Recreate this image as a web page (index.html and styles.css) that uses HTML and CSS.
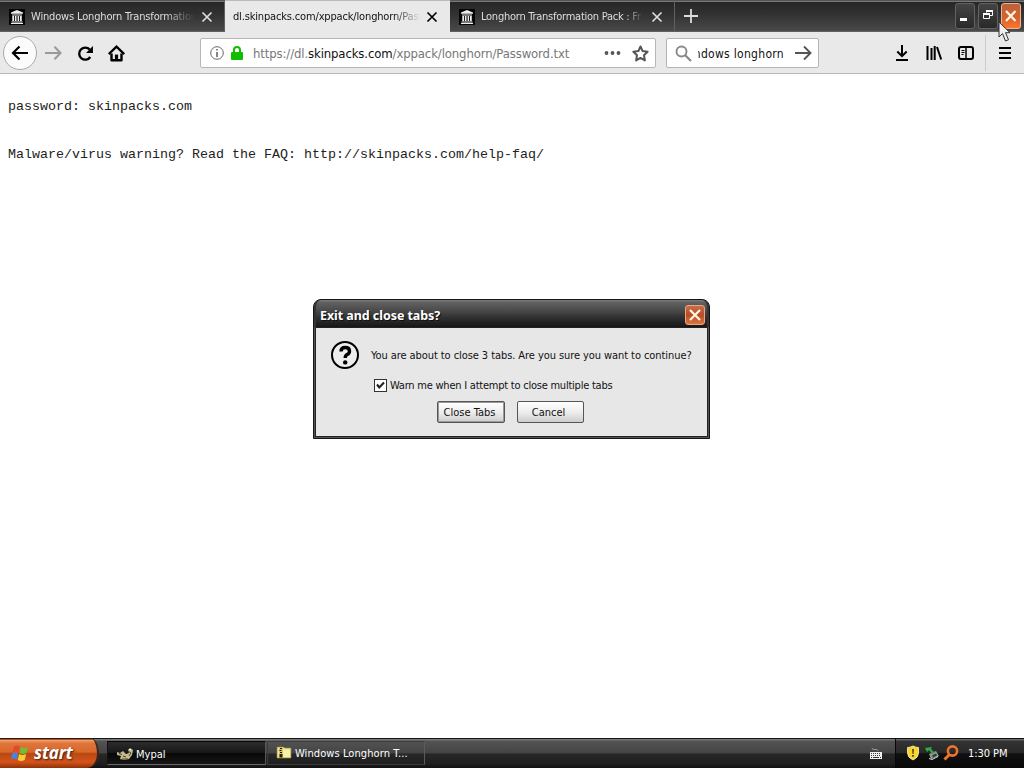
FILE: index.html
```html
<!DOCTYPE html>
<html lang="en">
<head>
<meta charset="utf-8">
<title>dl.skinpacks.com/xppack/longhorn/Password.txt</title>
<link rel="stylesheet" href="styles.css">
</head>
<body>
<svg class="defs" width="0" height="0">
  <symbol id="temple" viewBox="0 0 16 16"><rect width="16" height="16" fill="#050505"/><path d="M2 4.700V3.600L8 1l6 2.600v1.100zM3 5.500h10v1H3zM3.300 7h1.800v5H3.300zM6 7h1.500v5H6zM8.600 7h1.500v5H8.600zM11 7h1.800v5H11zM2.500 12.500h11v.9h-11zM2 14h12v1H2z" fill="#eee"/></symbol>
  <symbol id="cross" viewBox="0 0 12 12"><path d="M1.500 1.500l9 9m0-9l-9 9" fill="none" stroke="currentColor" stroke-width="1.700"/></symbol>
</svg>
<div class="screen">
  <header class="tabstrip">
    <div class="tab"><svg class="favicon"><use href="#temple"/></svg><span class="tab-title t1">Windows Longhorn Transformation</span><svg class="tab-close"><use href="#cross"/></svg></div>
    <div class="tab active"><span class="tab-title t2">dl.skinpacks.com/xppack/longhorn/Pass</span><svg class="tab-close"><use href="#cross"/></svg></div>
    <div class="tab"><svg class="favicon"><use href="#temple"/></svg><span class="tab-title t3">Longhorn Transformation Pack : Fr</span><svg class="tab-close"><use href="#cross"/></svg></div>
    <svg class="newtab" viewBox="0 0 14 14"><path d="M7 0v14M0 7h14" stroke="#ddd" stroke-width="1.800"/></svg>
    <div class="winbuttons">
      <div class="wb"><svg viewBox="0 0 17 24"><path d="M4 14h7v3H4z" fill="#fff"/></svg></div>
      <div class="wb"><svg viewBox="0 0 17 24"><path d="M7.500 8.500v-2h6v5h-2.500M4.500 9.500h6v5h-6z" fill="none" stroke="#fff"/><path d="M7 7h7M4 10h7" stroke="#fff" stroke-width="2"/></svg></div>
      <div class="wb close"><svg viewBox="0 0 17 24"><path d="M4 7l9.500 10M13.500 7L4 17" stroke="#fff3dc" stroke-width="2.300"/></svg></div>
    </div>
  </header>

  <nav class="toolbar">
    <div class="back"><svg width="18" height="16" viewBox="0 0 18 16"><path d="M17 8H2M8.500 1.500L2 8l6.500 6.500" fill="none" stroke="#000" stroke-width="2.200"/></svg></div>
    <svg class="fwd" viewBox="0 0 18 16"><path d="M0 8h15M9.500 1.800L15.500 8l-6 6.200" fill="none" stroke="#999" stroke-width="2"/></svg>
    <svg class="reload" viewBox="0 0 16 16"><path d="M12.500 11.300A5.700 5.700 0 1 1 12 4.300" fill="none" stroke="#000" stroke-width="2.200"/><path d="M15 1v6.500H8.500z"/></svg>
    <svg class="home" viewBox="0 0 16 16"><path d="M.7 8.600L8 1.500l7.300 7.100" fill="none" stroke="#000" stroke-width="2.100"/><path d="M3.300 8v6.300h9.400V8" fill="none" stroke="#000" stroke-width="2.300" stroke-linejoin="round"/><path d="M6.500 9h3v5h-3z"/></svg>
    <div class="urlbar">
      <svg class="info" viewBox="0 0 14 14"><circle cx="7" cy="7" r="6.300" fill="none" stroke="#666"/><path d="M6.200 3h1.600v1.600H6.200zM6.200 6h1.600v5H6.200z" fill="#666"/></svg>
      <svg class="lock" viewBox="0 0 12 14"><path d="M3 7V4a3 3 0 0 1 6 0v3" fill="none" stroke="#12bc00" stroke-width="2"/><rect y="6" width="12" height="8" rx="1" fill="#12bc00"/></svg>
      <span class="url">https://dl.<b>skinpacks.com</b>/xppack/longhorn/Password.txt</span>
      <svg class="dots" viewBox="0 0 16 4"><circle cx="2" cy="2" r="1.900"/><circle cx="8" cy="2" r="1.900"/><circle cx="14" cy="2" r="1.900"/></svg>
      <svg class="star" viewBox="0 0 16 16"><path d="M8 1.400l2 4.300 4.700.6-3.400 3.300.8 4.900L8 12.200l-4.100 2.300.8-4.900L1.300 6.300 6 5.700z" fill="none" stroke="#555" stroke-width="1.900" stroke-linejoin="round"/></svg>
    </div>
    <div class="search">
      <svg class="glass" viewBox="0 0 17 17"><circle cx="6.500" cy="6.500" r="5" fill="none" stroke="#888" stroke-width="1.900"/><path d="M10 10l6 6" stroke="#888" stroke-width="2.200"/></svg>
      <span class="query"><span>ndows longhorn</span></span>
      <svg class="go" viewBox="0 0 17 16"><path d="M0 8h15M9 1.500L15.500 8 9 14.500" fill="none" stroke="#555" stroke-width="1.900"/></svg>
    </div>
    <div class="tools">
      <svg viewBox="0 0 16 16"><path d="M8 0v11M3.300 6.500L8 11.200l4.700-4.700M2 15h12" fill="none" stroke="#000" stroke-width="2"/></svg>
      <svg viewBox="0 0 16 16"><path d="M1.500 1v14M5.500 3v12M8.700 1v14M11 2l4.200 12.500" fill="none" stroke="#000" stroke-width="2"/></svg>
      <svg viewBox="0 0 16 16"><rect x="1" y="2" width="14" height="12" rx="2" fill="none" stroke="#000" stroke-width="2"/><path d="M8 2v12" stroke="#000" stroke-width="1.500"/><path d="M3.500 5.500h3M3.500 7.500h3M3.500 9.500h2" stroke="#000"/></svg>
    </div>
    <div class="menu"><svg width="12" height="12" viewBox="0 0 12 12"><path d="M0 1h12M0 6h12M0 11h12" stroke="#000" stroke-width="2"/></svg></div>
  </nav>

  <main class="page">
<pre>
password: skinpacks.com


Malware/virus warning? Read the FAQ: http://skinpacks.com/help-faq/</pre>
  </main>

  <footer class="taskbar">
    <div class="start"><svg class="flag" viewBox="0 0 20 18"><path d="M4 2.500q3-2 6 0L8.500 8.500q-3-2-6 0z" fill="#e34a28"/><path d="M11 3q3 2 7 0l-1.500 6q-4 2-7 0z" fill="#72bd32"/><path d="M2.200 9.500q3-2 6 0l-1.500 6q-3-2-6 0z" fill="#4a83dc"/><path d="M9.200 10q3 2 7 0l-1.500 6q-4 2-7 0z" fill="#f6ce38"/></svg><span>start</span></div>
    <div class="task pressed"><svg class="task-icon" viewBox="0 0 16 16"><path d="M0 6l3 1 3-2 3 3 3-1-1-3 2-2 3 2-1 5-3 4-5 1-4-1 1-3-4-1z" fill="#c5ba91"/><path d="M2 7.500l3 1M6 10l3 1M11 5l3 2-2 3M5 13h6" stroke="#4c4228" fill="none"/><path d="M12 3h2v1h-2z" fill="#fff"/></svg><span>Mypal</span></div>
    <div class="task"><svg class="task-icon" viewBox="0 0 16 16"><path d="M1 2h6l2 1h6v10H1z" fill="#efe49a" stroke="#91843b" stroke-width=".7"/><path d="M7 5h7v7H7z" fill="#f8efaa"/><path d="M3 2.500h4v10.500H3z" fill="#d8ca68"/><path d="M4 3.500h2M3.500 5.500h2M4 7.500h2" stroke="#111"/><path d="M3.500 9h3v3.500h-3z" fill="#28230b"/></svg><span class="longhorn">Windows Longhorn T...</span></div>
    <svg class="keyboard" viewBox="0 0 14 11"><path d="M3 0q0 2 3 1.500T9 3" fill="none" stroke="#aaa" stroke-width=".8"/><path d="M1 4h12v7H1z" fill="#f1f1f1"/><path d="M2 5.500h10M2 7.500h10" stroke="#333" stroke-dasharray="1 1"/><path d="M2 9.500h1M4 9.500h6M11 9.500h1" stroke="#333"/></svg>
    <div class="tray">
      <svg viewBox="0 0 16 16"><path d="M8 1q3 1.500 5.500 1.500V8q0 4.500-5.500 7-5.500-2.500-5.500-7V2.500Q5 2.500 8 1z" fill="#f9d52b" stroke="#f3eab8" stroke-width=".9"/><path d="M7.200 4h1.600l-.3 5h-1zM7.200 10h1.600v1.700H7.200z" fill="#3b3413"/></svg>
      <svg viewBox="0 0 16 16"><path d="M5 9l7-3 3 5-8 3z" fill="#8f9992"/><path d="M8 10.500l4-2 1 2L9 12.500z" fill="#333b37"/><path d="M1 3l7-1-1 2 4 4-3 1-3-4-2 2z" fill="#35a846"/><path d="M5 13.500l3 1 6-3" stroke="#ddd" fill="none"/></svg>
      <svg viewBox="0 0 16 16"><circle cx="9.500" cy="6" r="4.600" fill="none" stroke="#ed742a" stroke-width="2.600"/><path d="M6.500 9.500l-5 5" stroke="#ed742a" stroke-width="3"/></svg>
      <span>1:30 PM</span>
    </div>
  </footer>

  <section class="dialog">
    <div class="dlg-title"><span>Exit and close tabs?</span><div class="dlg-close"><svg viewBox="0 0 18 18"><path d="M4 4l10 10M14 4L4 14" stroke="#fff5e7" stroke-width="2.200"/></svg></div></div>
    <div class="dlg-body">
      <div class="message"><svg class="question" viewBox="0 0 28 28"><circle cx="14" cy="14" r="13" fill="#eee" stroke="#000" stroke-width="2"/><path d="M10 10.500q0-4 4.200-4 4.300 0 4.300 3.700 0 2.200-2.300 3.400-2 1-2 3.400" fill="none" stroke="#000" stroke-width="3.400"/><circle cx="14.200" cy="21.400" r="2.200"/></svg><span>You are about to close 3 tabs. Are you sure you want to continue?</span></div>
      <div class="warn"><svg class="check" viewBox="0 0 13 13"><rect x=".5" y=".5" width="12" height="12" fill="#fff" stroke="#333"/><path d="M3 5.500l2.300 3L10 3.500" fill="none" stroke="#222" stroke-width="2.100"/></svg><span>Warn me when I attempt to close multiple tabs</span></div>
      <div class="buttons"><button class="default"><span>Close Tabs</span></button><button class="cancel"><span>Cancel</span></button></div>
    </div>
  </section>

  <svg class="pointer" viewBox="0 0 14 22"><path d="M1 1v15l3.500-3.500L7.500 20l3-1.300-3-7H12z" fill="#eee" stroke="#333" stroke-width="1"/></svg>
</div>
</body>
</html>
```

FILE: styles.css
```css
* { box-sizing: border-box; }
body { margin: 0; background: #fff; font-family: "DejaVu Sans Condensed", "DejaVu Sans", sans-serif; font-stretch: condensed; font-size: 11px; color: #111; }
svg { display: block; flex: none; }
.defs { position: absolute; }
span { white-space: nowrap; }
.screen { width: 1024px; height: 768px; display: flex; flex-direction: column; overflow: hidden; position: relative; }

.tabstrip { height: 32px; flex: none; display: flex; background: linear-gradient(#555 0 1px, #777 1px 2px, #272727 2px, #303030 40%, #484848 95%, #6b6b6b); }
.tab { width: 225px; height: 32px; display: flex; align-items: center; padding: 2px 11px 0 9px; border-right: 1px solid #606060; color: #ddd; }
.tab.active { background: linear-gradient(#bbb 0 1px, #e9e9e9 1px); color: #111; border: 0; padding: 2px 12px 0 8px; }
.favicon { width: 16px; height: 16px; margin-right: 6px; }
.tab-title { flex: 1; overflow: hidden; margin-right: 7px; line-height: 16px; mask-image: linear-gradient(90deg, #000 82%, transparent 100%); }
.t1 { letter-spacing: -.16px; }
.t2 { letter-spacing: -.16px; margin-right: 5px; mask-image: linear-gradient(90deg, #000 85%, transparent); }
.t3 { letter-spacing: -.25px; mask-image: linear-gradient(90deg, #000 88%, transparent); }
.tab-close { width: 12px; height: 12px; }
.tab.active .tab-close { color: #000; }
.newtab { width: 14px; height: 14px; margin: 9px 0 0 9px; }
.winbuttons { display: flex; gap: 3px; margin: 3px 3px 0 auto; align-items: flex-start; }
.wb { width: 20px; height: 26px; border: 1px solid #626262; border-radius: 3px; background: linear-gradient(#444, #292929); }
.wb svg { width: 17px; height: 24px; }
.wb.close { border-color: #efb591; background: linear-gradient(#bd6038, #d46232 60%, #ff7627); }

.toolbar { height: 42px; flex: none; display: flex; align-items: center; background: #e9e9e9; border-bottom: 1px solid #b9b9b9; padding: 1px 0 0 3px; }
.back { width: 34px; height: 34px; border: 1px solid #aaa; border-radius: 50%; background: #fbfbfb; display: grid; place-items: center; }
.fwd { width: 18px; height: 16px; margin-left: 8px; }
.reload { width: 17px; height: 17px; margin-left: 14px; }
.home { width: 17px; height: 17px; margin-left: 14px; }
.urlbar { width: 456px; height: 30px; margin-left: 75px; border: 1px solid #b6b6b6; border-radius: 2px; background: #fff; display: flex; align-items: center; padding: 0 6px 0 9px; }
.info { width: 14px; height: 14px; }
.lock { width: 12px; height: 14px; margin: 0 10px 1px 7px; }
.url { font-size: 13px; color: #777; letter-spacing: -.12px; }
.url b { font-weight: normal; color: #111; }
.dots { width: 17px; height: 4px; margin-left: auto; fill: #555; }
.star { width: 17px; height: 17px; margin-left: 11px; }
.search { width: 153px; height: 30px; margin-left: 10px; border: 1px solid #b6b6b6; border-radius: 2px; background: #fff; display: flex; align-items: center; padding: 0 6px 0 8px; }
.glass { width: 17px; height: 17px; }
.query { width: 86px; overflow: hidden; margin-left: 6px; font-size: 12px; line-height: 18px; letter-spacing: .3px; display: flex; justify-content: flex-end; padding-top: 1px; }
.go { width: 17px; height: 16px; margin-left: auto; }
.tools { display: flex; gap: 16px; margin-left: 75px; }
.tools svg { width: 16px; height: 16px; }
.menu { height: 36px; width: 39px; margin-left: auto; border-left: 1px solid #ccc; display: flex; align-items: center; padding-left: 13px; }

.page { flex: 1; padding: 25px 8px 0; }
.page pre { margin: 0; font: 13.333px/16px "Liberation Mono", monospace; color: #222; }

.taskbar { height: 30px; flex: none; display: flex; align-items: stretch; color: #fff; background: linear-gradient(#151515 0 1px, #777 1px 2px, #535353 3px, #444 50%, #272727 53%, #202020 85%, #111); }
.start { width: 99px; display: flex; align-items: center; padding: 0 0 1px 10px; border-radius: 0 9px 12px 0 / 0 15px 15px 0; background: linear-gradient(#3b1304 0 1px, #f7a36a 2px, #df763e 5px, #d96729 47%, #b84812 52%, #d4541a 80%, #8f3108); border-right: 2px solid #3e251b; }
.flag { width: 20px; height: 18px; margin-right: 4px; }
.start span { font: italic bold 17px/20px "Open Sans", sans-serif; letter-spacing: -.15px; text-shadow: 1px 1px 2px #402010; }
.task { width: 158px; height: 24px; margin: 3px 0 0 1px; border: 1px solid #3b3b3b; border-right-color: #5b5b5b; display: flex; align-items: center; padding-left: 8px; }
.task.pressed { width: 159px; margin-left: 8px; padding: 2px 0 0 9px; background: linear-gradient(#2c2c2c, #171717 50%, #080808 52%, #151515); border-color: #050505 #555 #686868 #111; }
.task-icon { width: 16px; height: 16px; margin-right: 3px; }
.longhorn { letter-spacing: .08px; }
.keyboard { width: 14px; height: 11px; margin: 10px 12px 0 auto; }
.tray { width: 129px; border-left: 1px solid #080808; background: linear-gradient(#111 0 1px, #666 1px 2px, #333 3px, #292929 50%, #111 52%, #080808); display: flex; align-items: center; gap: 3px; padding-left: 9px; }
.tray svg { width: 16px; height: 16px; }
.tray span { margin-left: 6px; letter-spacing: -.05px; }

.dialog { position: absolute; left: 313px; top: 299px; width: 397px; height: 140px; border: 1px solid #151515; border-radius: 8px 8px 0 0; background: #555; padding: 0 1px 1px; }
.dlg-title { height: 27px; display: flex; align-items: center; justify-content: space-between; padding: 4px 2px 0 4px; margin: 0 -1px; border-radius: 7px 7px 0 0; background: linear-gradient(#777 0 1px, #626262 2px, #494949 40%, #303030 65%, #171717); border-left: 2px solid #333; border-right: 2px solid #333; }
.dlg-title span { color: #fff; font: bold 12.500px/16px "Noto Sans", sans-serif; letter-spacing: -.06px; text-shadow: 1px 1px #111; }
.dlg-close { width: 20px; height: 20px; margin-top: -1px; border: 1px solid #eda482; border-radius: 3px; background: linear-gradient(#c76f4b, #b74c24 50%, #dc7440); }
.dlg-close svg { width: 18px; height: 18px; }
.dlg-body { height: 110px; background: #e7e7e7; border: 1px solid #222; padding: 13px 15px; }
.message { display: flex; align-items: center; letter-spacing: -.075px; }
.question { width: 28px; height: 28px; margin-right: 12px; }
.warn { display: flex; align-items: center; margin: 9px 0 0 43px; letter-spacing: -.23px; }
.check { width: 13px; height: 13px; margin-right: 3px; }
.warn span { padding-top: 1px; }
.buttons { display: flex; gap: 12px; margin: 9px 0 0 106px; }
button { width: 68px; height: 22px; padding: 0; border: 1px solid #555; border-radius: 2px; font: inherit; color: #111; background: linear-gradient(#fff, #eee 50%, #cdcdcd); }
button.default { box-shadow: inset 0 0 0 1px #999; padding-right: 3px; }
button.cancel { width: 67px; padding-right: 4px; }
.pointer { position: absolute; left: 998px; top: 21px; width: 14px; height: 22px; }
```
